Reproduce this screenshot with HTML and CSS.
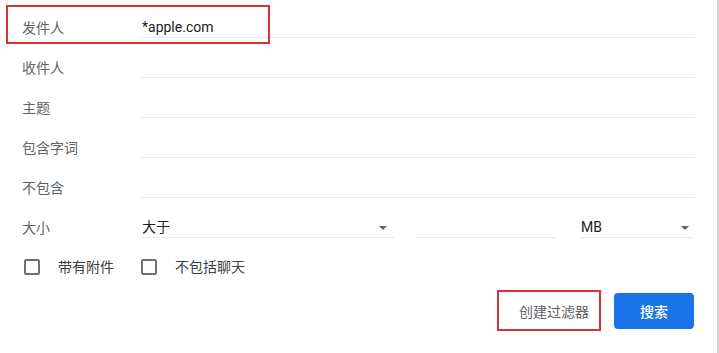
FILE: index.html
```html
<!DOCTYPE html>
<html lang="zh-CN">
<head>
    <meta charset="UTF-8">
    <meta name="viewport" content="width=device-width, initial-scale=1.0">
    <title>搜索选项</title>
    <link rel="stylesheet" href="styles.css">
</head>
<body>
    <div class="panel">
        <div class="form">
            <div class="row">
                <div class="label">发件人</div>
                <div class="field"><span class="value">*apple.com</span></div>
            </div>
            <div class="row">
                <div class="label">收件人</div>
                <div class="field"></div>
            </div>
            <div class="row">
                <div class="label">主题</div>
                <div class="field"></div>
            </div>
            <div class="row">
                <div class="label">包含字词</div>
                <div class="field"></div>
            </div>
            <div class="row">
                <div class="label">不包含</div>
                <div class="field"></div>
            </div>
            <div class="row">
                <div class="label">大小</div>
                <div class="size-fields">
                    <div class="field select select-op">
                        <span class="value">大于</span>
                        <span class="arrow"></span>
                    </div>
                    <div class="field field-num"></div>
                    <div class="field select select-unit">
                        <span class="value">MB</span>
                        <span class="arrow"></span>
                    </div>
                </div>
            </div>

            <div class="checks">
                <div class="check-item">
                    <span class="checkbox"></span>
                    <span class="check-label">带有附件</span>
                </div>
                <div class="check-item">
                    <span class="checkbox"></span>
                    <span class="check-label">不包括聊天</span>
                </div>
            </div>

            <div class="actions">
                <button class="text-btn marked">创建过滤器</button>
                <button class="primary-btn">搜索</button>
            </div>
        </div>

        <!-- пометка поверх первой строки -->
        <div class="mark mark-from"></div>
    </div>
</body>
</html>
```

FILE: styles.css
```css
* {
    margin: 0;
    padding: 0;
    box-sizing: border-box;
}

body {
    font-family: Roboto, 'Noto Sans CJK SC', sans-serif;
    font-size: 14px;
    background: white;
    color: #202124;
}

.panel {
    position: relative;
    width: 719px;
    height: 353px;
    border-right: 2px solid #d4d4d4;
    background: white;
}

.row {
    display: grid;
    grid-template-columns: 119px 554px;
    padding-left: 22px;
    height: 38px;
    margin-bottom: 2px;
}

.label {
    align-self: end;
    line-height: 20px;
    color: #5f6368;
}

.field {
    height: 38px;
    border-bottom: 1px solid #e9e9e9;
    display: flex;
    align-items: flex-end;
    padding-left: 1px;
}

.value {
    line-height: 20px;
    color: #202124;
}

.size-fields {
    display: flex;
}

.select-op {
    width: 253px;
}

.field-num {
    width: 140px;
    margin-left: 22px;
}

.select-unit {
    width: 114px;
    margin-left: 24px;
}

.arrow {
    margin-left: auto;
    margin-right: 7px;
    margin-bottom: 7px;
    border-left: 4px solid transparent;
    border-right: 4px solid transparent;
    border-top: 4px solid #5f6368;
}

.select-unit .arrow {
    margin-right: 5px;
}

.checks {
    display: flex;
    align-items: center;
    height: 20px;
    margin-top: 19px;
    padding-left: 24px;
}

.check-item {
    display: flex;
    align-items: center;
}

.check-item:first-child {
    width: 117px;
}

.checkbox {
    width: 16px;
    height: 16px;
    border: 2px solid #6f6f6f;
    border-radius: 2px;
}

.check-label {
    margin-left: 18px;
    line-height: 20px;
    color: #3c4043;
}

.actions {
    display: flex;
    justify-content: flex-end;
    align-items: center;
    margin-top: 13px;
    padding-right: 23px;
}

.text-btn {
    width: 104px;
    height: 41px;
    padding: 0 10px 0 20px;
    border: none;
    background: white;
    color: #5f6368;
    font: inherit;
    text-align: left;
    margin-right: 13px;
    cursor: pointer;
}

.primary-btn {
    width: 80px;
    height: 36px;
    border: none;
    border-radius: 4px;
    background: #1a73e8;
    color: white;
    font: inherit;
    font-weight: 500;
    cursor: pointer;
}

.marked {
    border: 2px solid #d6323a;
}

.mark {
    position: absolute;
    border: 2px solid #d6323a;
    pointer-events: none;
}

.mark-from {
    left: 6px;
    top: 5px;
    width: 264px;
    height: 39px;
}
```
